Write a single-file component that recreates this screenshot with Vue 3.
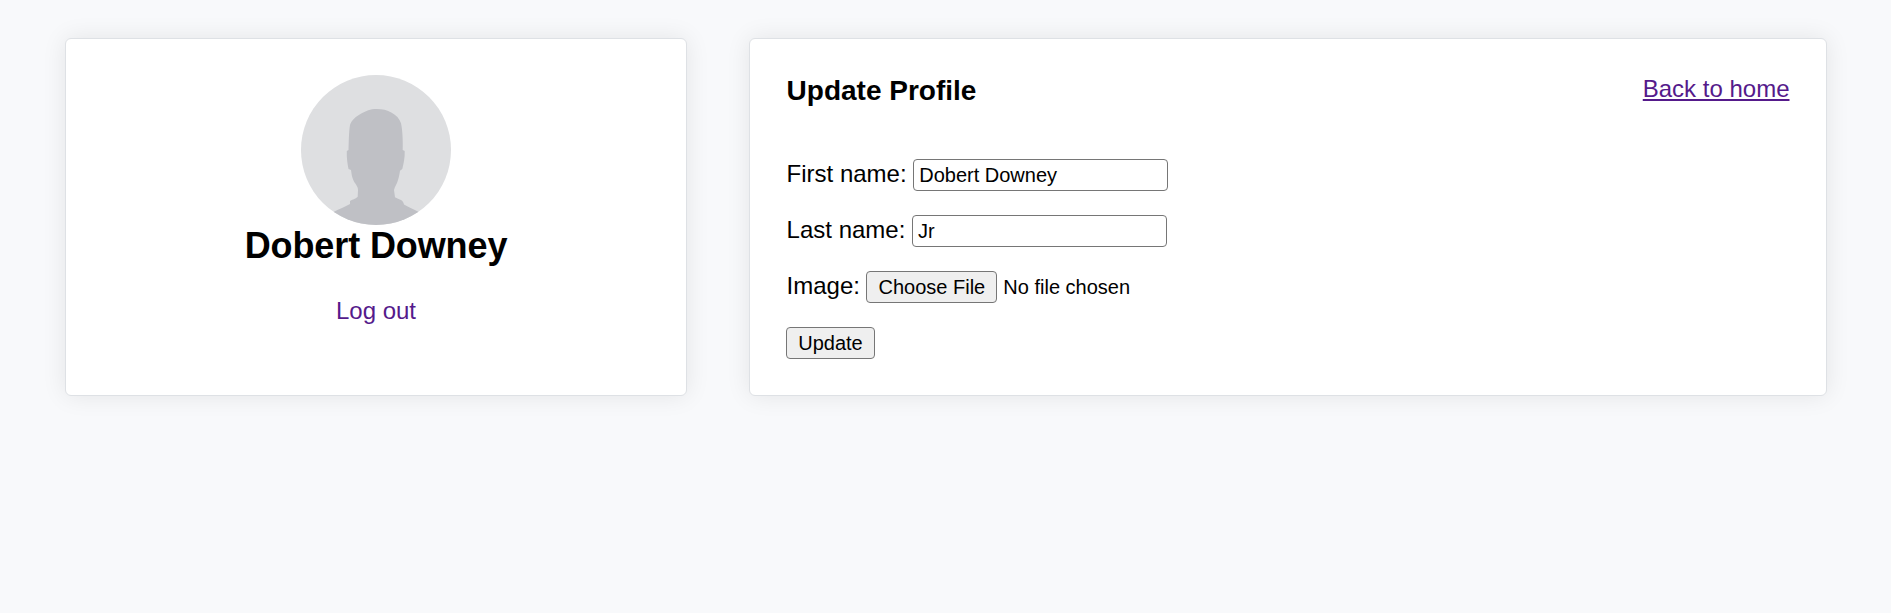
<script setup>
import { ref } from 'vue'

const firstName = ref('Dobert Downey')
const lastName = ref('Jr')
</script>

<template>
  <main class="page">
    <section class="card profile">
      <svg class="avatar" viewBox="0 0 150 150" aria-hidden="true">
        <defs>
          <clipPath id="avatar-clip"><circle cx="75" cy="75" r="75" /></clipPath>
        </defs>
        <g clip-path="url(#avatar-clip)">
          <rect width="150" height="150" fill="#dedfe1" />
          <path
            fill="#bfc0c5"
            d="M75.7 34C69 34 65 36 60.700 38.300C55 41.500 50.500 45 49 50C47.800 57 47.800 68 47.500 75L45.800 76C45.500 83 46.500 89 47.500 94L50 95C50.500 99 51 102 52.300 105C54 109 57 111 57 115L56.700 121.700C54.500 124 51 124.500 49 126L49 129C44 132 38 134 33 136.700L20 150L130 150L117.300 136.700C112 134 107 132 103 129.500C102.500 127 101.500 126 100 125C98 124.500 96 123.500 94 122.300L93 115C94 111 96 109 97 105C98 102 98.500 99 99 95.700L101.300 94C102.500 89 104 83 103.700 76L101.700 75C102 66 101.500 55 100 48.300C98.500 43.500 95 40 90.700 37.700C86 35 81.500 34 75.700 34Z"
          />
        </g>
      </svg>
      <h2 class="name">{{ firstName }}</h2>
      <a class="logout" href="#">Log out</a>
    </section>

    <section class="card update">
      <header class="head">
        <h3 class="title">Update Profile</h3>
        <a class="back" href="#">Back to home</a>
      </header>
      <form class="form" @submit.prevent>
        <label class="row"><span class="label">First name:</span><input v-model="firstName" class="field" type="text" /></label>
        <label class="row"><span class="label">Last name:</span><input v-model="lastName" class="field" type="text" /></label>
        <div class="row">
          <span class="label">Image:</span>
          <button class="button choose" type="button">Choose File</button>
          <span class="status">No file chosen</span>
        </div>
        <div class="row"><button class="button submit" type="submit">Update</button></div>
      </form>
    </section>
  </main>
</template>

<style>
body {
  background: #f8f9fb;
}
</style>

<style scoped>
.page {
  display: grid;
  grid-template-columns: 622px 1078px;
  grid-template-rows: 358px;
  column-gap: 62px;
  box-sizing: border-box;
  height: 613px;
  padding: 38px 0 0 65px;
  background: #f8f9fb;
  color: #000;
  font: 24px/27px "Liberation Sans", Arial, sans-serif;
}

.card {
  box-sizing: border-box;
  padding: 36px;
  border: 1px solid #dee1e5;
  border-radius: 6px;
  background: #fff;
  box-shadow: 0 0 24px rgba(0, 0, 0, 0.085);
}

.profile {
  display: flex;
  flex-direction: column;
  align-items: center;
}

.avatar {
  display: block;
  width: 150px;
  height: 150px;
}

.name {
  margin: 0;
  font-size: 36px;
  line-height: 41px;
  letter-spacing: -0.1px;
}

.logout {
  margin-top: 31px;
  color: #551a8b;
  text-decoration: none;
}

.head {
  display: flex;
  justify-content: space-between;
  align-items: flex-start;
}

.title {
  margin: 0;
  padding-left: 0.6px;
  font-size: 28px;
  line-height: 32px;
}

.back {
  padding-right: 0.5px;
  color: #551a8b;
  text-decoration: underline;
  text-decoration-thickness: 2px;
  text-underline-offset: 2px;
}

.form {
  display: flex;
  flex-direction: column;
  gap: 24px;
  margin-top: 52px;
}

.row {
  display: flex;
  align-items: flex-start;
  height: 32px;
}

.label {
  padding-left: 0.6px;
  line-height: 29px;
}

.field,
.button {
  box-sizing: border-box;
  height: 32px;
  margin: 0;
  border: 1px solid #767676;
  border-radius: 4px;
  color: #000;
  font: 20px/22px "Liberation Sans", Arial, sans-serif;
}

.field {
  width: 255px;
  margin-left: 6.6px;
  padding: 4px 5px;
  background: #fff;
}

.button {
  padding: 4px 0;
  background: #efefef;
  text-align: center;
}

.choose {
  width: 131px;
  margin-left: 6.4px;
}

.submit {
  width: 89px;
}

.status {
  margin-left: 6px;
  font-size: 20px;
  line-height: 32px;
}
</style>
